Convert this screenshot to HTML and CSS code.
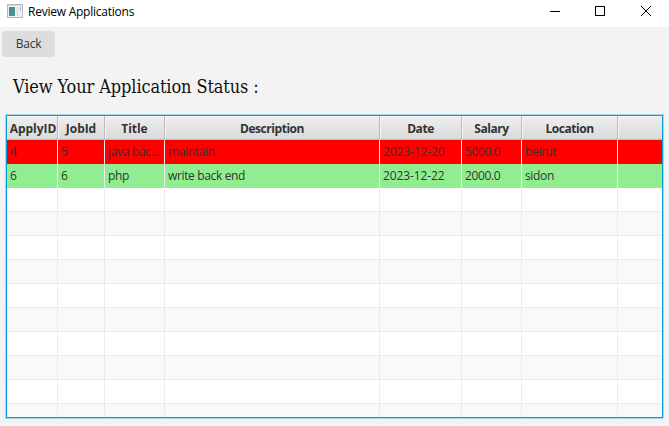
FILE: index.html
```html
<!DOCTYPE html>
<html lang="en">
<head>
<meta charset="utf-8">
<title>Review Applications</title>
<link rel="stylesheet" href="styles.css">
</head>
<body>
<header class="titlebar">
  <svg class="app-icon" width="16" height="14" viewBox="0 0 16 14" shape-rendering="crispEdges">
    <defs><linearGradient id="g" x1="0" y1="0" x2="1" y2="1"><stop offset="0" stop-color="#4a7fb5"/><stop offset="1" stop-color="#46a27c"/></linearGradient></defs>
    <rect x="0.5" y="0.5" width="15" height="13" fill="#f2f2f2" stroke="#b4b8bc"/>
    <rect x="1" y="1" width="14" height="1" fill="#d5d8da"/>
    <rect x="2" y="3" width="6" height="9" fill="url(#g)"/>
    <rect x="9" y="3" width="3" height="9" fill="#e1e6ea"/>
    <rect x="13" y="3" width="1" height="4" fill="#98b9d2"/>
  </svg>
  <span class="window-title">Review Applications</span>
  <div class="window-controls">
    <svg width="10" height="10" viewBox="0 0 10 10"><path d="M0 5.5H10" stroke="#000"/></svg>
    <svg width="10" height="10" viewBox="0 0 10 10"><rect x=".5" y=".5" width="9" height="9" fill="none" stroke="#000"/></svg>
    <svg class="close" width="10" height="10" viewBox="0 0 10 10"><path d="M0 0L10 10M10 0L0 10" stroke="#000"/></svg>
  </div>
</header>
<main>
  <button class="back">Back</button>
  <h1>View Your Application Status :</h1>
  <section class="table">
    <div class="row head"><div class="id">ApplyID</div><div class="id">JobId</div><div class="id">Title</div><div>Description</div><div>Date</div><div>Salary</div><div>Location</div><div></div></div>
    <div class="row rejected"><div>4</div><div>5</div><div>java bac...</div><div>maintain</div><div class="date">2023-12-20</div><div>5000.0</div><div>beirut</div><div></div></div>
    <div class="row accepted"><div>6</div><div>6</div><div>php</div><div>write back end</div><div class="date">2023-12-22</div><div>2000.0</div><div>sidon</div><div></div></div>
    <div class="row"><div></div><div></div><div></div><div></div><div></div><div></div><div></div><div></div></div>
    <div class="row alt"><div></div><div></div><div></div><div></div><div></div><div></div><div></div><div></div></div>
    <div class="row"><div></div><div></div><div></div><div></div><div></div><div></div><div></div><div></div></div>
    <div class="row alt"><div></div><div></div><div></div><div></div><div></div><div></div><div></div><div></div></div>
    <div class="row"><div></div><div></div><div></div><div></div><div></div><div></div><div></div><div></div></div>
    <div class="row alt"><div></div><div></div><div></div><div></div><div></div><div></div><div></div><div></div></div>
    <div class="row"><div></div><div></div><div></div><div></div><div></div><div></div><div></div><div></div></div>
    <div class="row alt"><div></div><div></div><div></div><div></div><div></div><div></div><div></div><div></div></div>
    <div class="row"><div></div><div></div><div></div><div></div><div></div><div></div><div></div><div></div></div>
    <div class="row alt"><div></div><div></div><div></div><div></div><div></div><div></div><div></div><div></div></div>
  </section>
</main>
</body>
</html>
```
FILE: styles.css
```css
* { box-sizing: border-box; }
body {
  margin: 0;
  height: 426px;
  overflow: hidden;
  background: #f3f3f3;
  color: #333;
  font: 12px/16px "Open Sans", "Noto Sans", sans-serif;
}
.titlebar {
  display: flex;
  height: 27px;
  padding: 4px 18px 0 7px;
  background: #fff;
}
.window-title { margin-left: 5px; color: #000; letter-spacing: -0.24px; }
.window-controls { display: flex; gap: 35px; margin-left: auto; padding-top: 2px; }
.window-controls svg { display: block; }
.window-controls .close { margin-left: 1px; overflow: visible; }
main { padding: 4px 5px 0; }
.back {
  display: block;
  width: 53px;
  height: 26px;
  margin: 0 0 0 -3px;
  padding: 0;
  border: 0;
  border-radius: 3px;
  background: #ddd;
  color: #333;
  font: inherit;
  letter-spacing: -0.3px;
}
h1 {
  margin: 18px 0 16px 8px;
  color: #111;
  font: 18px/24px "DejaVu Serif Condensed", "DejaVu Serif", serif;
  letter-spacing: -0.11px;
  white-space: nowrap;
}
.table {
  width: 657px;
  height: 303px;
  margin-left: 1px;
  overflow: hidden;
  border: 1px solid #039ed3;
  box-shadow: 0 0 0 1px #a5d8ea;
  background: #fff;
}
.row {
  display: grid;
  grid-template-columns: 51px 47px 60px 215px 82px 60px 96px 44px;
  height: 24px;
}
.row > div {
  padding: 4px 0 0 3px;
  overflow: hidden;
  border-right: 1px solid #ececec;
  border-bottom: 1px solid #ececec;
  letter-spacing: -0.35px;
  white-space: nowrap;
}
.row > .date { letter-spacing: -0.1px; }
.row > div:last-child { border-right: 0; }
.alt { background: #f9f9f9; }
.rejected { background: #f00; }
.accepted { background: #90ee90; }
.rejected > div, .accepted > div { border-bottom: 0; }
.head { background: linear-gradient(#efefef, #d9d9d9); font-weight: 700; text-align: center; }
.head > div { padding: 5px 0 0; border-color: #bcbcbc; box-shadow: inset 1px 1px #f5f5f5; letter-spacing: -0.45px; }
.head > .id { letter-spacing: -0.05px; }
.head > .id:first-child { padding-left: 2px; }
```
